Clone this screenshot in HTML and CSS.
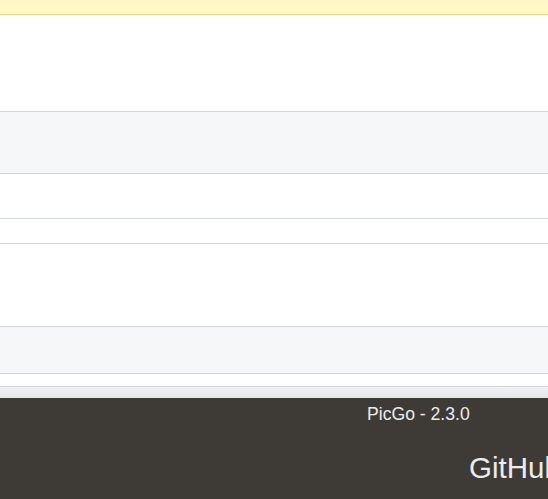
FILE: index.html
```html
<!DOCTYPE html>
<html>
<head>
<meta charset="utf-8">
<link rel="stylesheet" href="styles.css">
</head>
<body>
<div class="page">
  <div class="flash"></div>
  <div class="row h96"></div>
  <div class="row gray h61"></div>
  <div class="row h44"></div>
  <div class="row h24"></div>
  <div class="row h82"></div>
  <div class="row gray h46"></div>
  <div class="row h12"></div>
  <div class="shade"></div>
  <footer class="footer">
    <div class="version">PicGo - 2.3.0</div>
    <div class="github">GitHub</div>
  </footer>
</div>
</body>
</html>
```
FILE: styles.css
```css
html, body {
  margin: 0;
  padding: 0;
  background: #ffffff;
  overflow: hidden;
}
.page {
  width: 548px;
  height: 499px;
  display: flex;
  flex-direction: column;
  overflow: hidden;
  font-family: "Liberation Sans", Arial, sans-serif;
}
.flash {
  height: 14px;
  flex: none;
  background: #fff8c5;
  border-bottom: 1px solid #f2d67c;
}
.row {
  flex: none;
  background: #ffffff;
  border-bottom: 1px solid #d3d7dc;
}
.row.gray { background: #f6f7f9; }
.h96 { height: 96px; }
.h61 { height: 61px; }
.h44 { height: 44px; }
.h24 { height: 24px; }
.h82 { height: 82px; }
.h46 { height: 46px; }
.h12 { height: 12px; }
.shade {
  flex: none;
  height: 11px;
  background: linear-gradient(#f1f2f3, #e3e4e5);
}
.footer {
  flex: 1;
  background: #3e3b36;
  color: #ececec;
  padding-top: 6px;
  display: flex;
  flex-direction: column;
  white-space: nowrap;
}
.version {
  margin-left: 367px;
  font-size: 17.6px;
  line-height: 20px;
}
.github {
  margin-left: 469px;
  margin-top: 28px;
  font-size: 29.5px;
  line-height: 32px;
}
```
